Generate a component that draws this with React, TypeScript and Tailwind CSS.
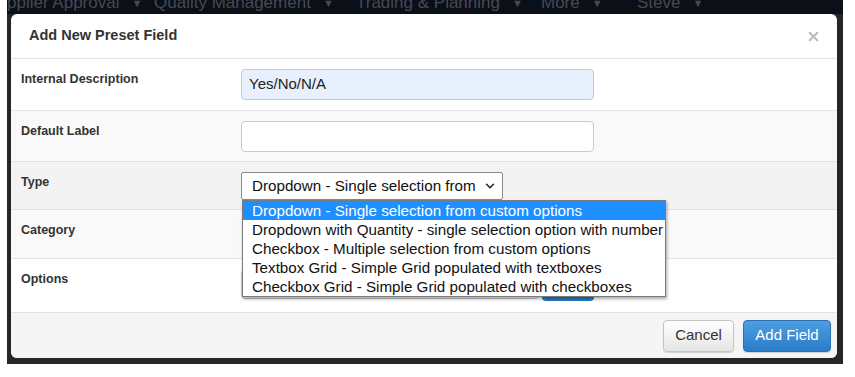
import { X, ChevronDown } from 'lucide-react'

const typeOptions = [
  'Dropdown - Single selection from custom options',
  'Dropdown with Quantity - single selection option with number',
  'Checkbox - Multiple selection from custom options',
  'Textbox Grid - Simple Grid populated with textboxes',
  'Checkbox Grid - Simple Grid populated with checkboxes',
]

const navItems = [
  { label: 'pplier Approval', width: 'w-[147px]' },
  { label: 'Quality Management', width: 'w-[202px]' },
  { label: 'Trading & Planning', width: 'w-[185px]' },
  { label: 'More', width: 'w-[96px]' },
  { label: 'Steve', width: 'w-[80px]' },
]

function Row({ label, bg, height, children }: { label: string; bg: string; height: string; children?: React.ReactNode }) {
  return (
    <div className={`flex border-t border-[#e3e3e3] ${bg} ${height}`}>
      <div className="w-[230px] shrink-0 pl-[10px] pt-[13px] text-[12.5px] leading-[15px] font-bold text-[#333]">{label}</div>
      <div className="pt-[10px]">{children}</div>
    </div>
  )
}

export default function App() {
  return (
    <div className="w-[855px] h-[377px] bg-white overflow-hidden" style={{ fontFamily: '"Liberation Sans", Arial, sans-serif' }}>
      <div className="ml-[7px] w-[836px] h-[364px] bg-[#262626] overflow-hidden">
        {/* navbar behind the backdrop */}
        <div className="h-[14px] bg-[#0b0f18] overflow-hidden">
          <div className="flex -mt-[7px] text-[17px] leading-[20px] text-[#454a53]">
            {navItems.map((n) => (
              <div key={n.label} className={`${n.width} shrink-0 flex items-center gap-3`}>
                <span>{n.label}</span>
                <span className="text-[11px]">▼</span>
              </div>
            ))}
          </div>
        </div>

        {/* modal */}
        <div className="ml-[4px] w-[826px] h-[344px] bg-white rounded-[6px] flex flex-col relative">
          <div className="h-[44px] flex items-center justify-between pl-[18px] pr-[16px]">
            <h4 className="text-[14.5px] font-bold text-[#333]">Add New Preset Field</h4>
            <X size={15} strokeWidth={3.5} className="text-[#bcbcbc]" />
          </div>

          <Row label="Internal Description" bg="bg-white" height="h-[52px]">
            <div className="w-[353px] h-[31px] border border-[#c9c9c9] rounded-[4px] bg-[#e8f0fe] pl-[7px] flex items-center text-[15px] text-[#222]">
              Yes/No/N/A
            </div>
          </Row>
          <Row label="Default Label" bg="bg-[#f9f9f9]" height="h-[51px]">
            <div className="w-[353px] h-[31px] border border-[#c9c9c9] rounded-[4px] bg-white" />
          </Row>
          <Row label="Type" bg="bg-[#f3f3f3]" height="h-[48px]">
            <div className="w-[262px] h-[28px] border border-[#8a8a8a] rounded-[2px] bg-white flex items-center justify-between pl-[10px] pr-[5px] text-[15.2px] text-[#111]">
              <span>Dropdown - Single selection from</span>
              <ChevronDown size={14} strokeWidth={2.5} className="text-[#222]" />
            </div>
          </Row>
          <Row label="Category" bg="bg-[#f9f9f9]" height="h-[49px]" />
          <Row label="Options" bg="bg-white" height="h-[54px]">
            <div className="flex gap-[4px]">
              <div className="w-[297px] h-[30px] border border-[#c9c9c9] rounded-[4px] bg-white" />
              <div className="w-[52px] h-[32px] rounded-[4px] bg-[#2a7bc4]" />
            </div>
          </Row>

          <div className="flex-1 border-t border-[#e3e3e3] bg-[#f5f5f5] rounded-b-[6px] flex items-center justify-end gap-[9px] pr-[6px]">
            <button className="w-[71px] h-[32px] rounded-[4px] border border-[#c4c4c4] bg-gradient-to-b from-white to-[#e6e6e6] text-[15px] text-[#333] shadow-[0_1px_1px_rgba(0,0,0,0.15)]">
              Cancel
            </button>
            <button className="w-[88px] h-[32px] rounded-[4px] border border-[#2b6fb0] bg-gradient-to-b from-[#4c9ee3] to-[#2a7cc8] text-[15px] text-white shadow-[0_1px_1px_rgba(0,0,0,0.15)]">
              Add Field
            </button>
          </div>

          {/* open native dropdown list */}
          <div className="absolute left-[231px] top-[186px] w-[424px] bg-white border border-[#7a7a7a] shadow-[1px_2px_3px_rgba(0,0,0,0.35)] z-10">
            {typeOptions.map((o, i) => (
              <div
                key={o}
                className={`h-[19px] pl-[9px] text-[15.2px] leading-[19px] whitespace-nowrap ${i === 0 ? 'bg-[#1e8fff] text-white' : 'text-[#111]'}`}
              >
                {o}
              </div>
            ))}
          </div>
        </div>
      </div>
    </div>
  )
}
